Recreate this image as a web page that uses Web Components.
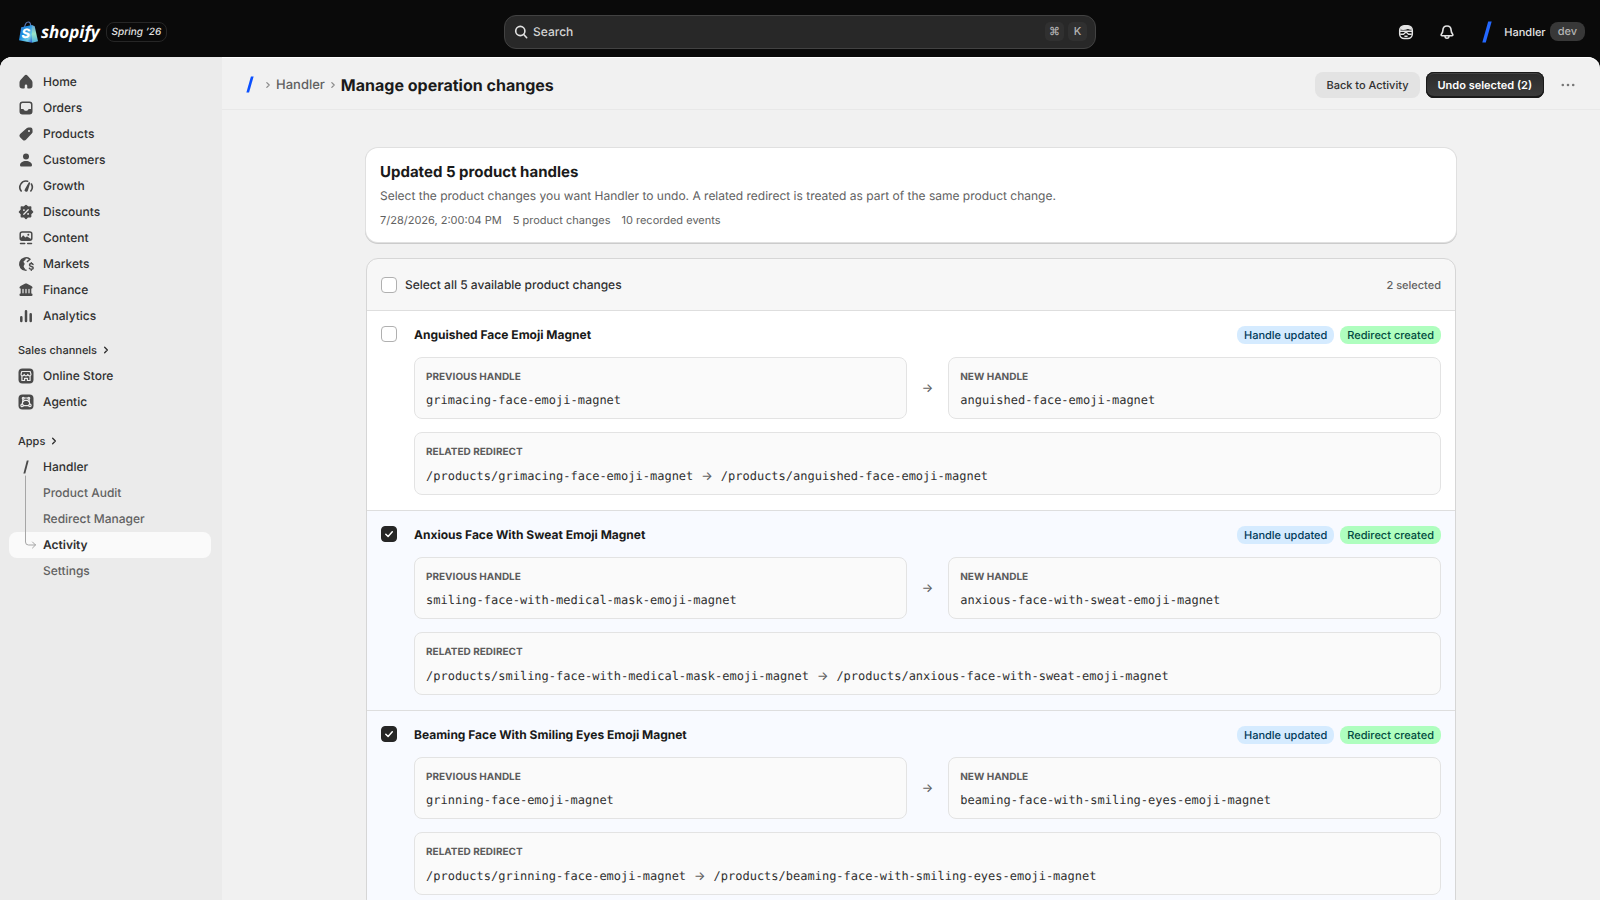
<!DOCTYPE html>
<html lang="en">
<head>
<meta charset="utf-8">
<meta name="viewport" content="width=device-width, initial-scale=1">
<title>Manage operation changes</title>
<style>
html, body{
    margin:0;
    height:100%;
}
body{
    font-family: Inter, "Liberation Sans", sans-serif;
    font-size:12px;
    line-height:20px;
    color:#303030;
    background:#0a0a0a;
    text-rendering:geometricPrecision;
}
</style>
</head>
<body>
<app-shell>
    <top-bar slot="top"></top-bar>
    <side-nav slot="nav"></side-nav>
    <page-header slot="header" parent="Handler" heading="Manage operation changes"></page-header>

    <summary-card heading="Updated 5 product handles">
        Select the product changes you want Handler to undo. A related redirect is treated as part of the same product change.
        <span slot="meta">7/28/2026, 2:00:04 PM</span>
        <span slot="meta">5 product changes</span>
        <span slot="meta">10 recorded events</span>
    </summary-card>

    <change-list label="Select all 5 available product changes" count="2 selected">
        <change-row heading="Anguished Face Emoji Magnet" from="grimacing-face-emoji-magnet" to="anguished-face-emoji-magnet"></change-row>
        <change-row selected heading="Anxious Face With Sweat Emoji Magnet" from="smiling-face-with-medical-mask-emoji-magnet" to="anxious-face-with-sweat-emoji-magnet"></change-row>
        <change-row selected heading="Beaming Face With Smiling Eyes Emoji Magnet" from="grinning-face-emoji-magnet" to="beaming-face-with-smiling-eyes-emoji-magnet"></change-row>
    </change-list>
</app-shell>

<script>
// 20x20 icons, keyed by name
const icons = {
    home: '<path fill="currentColor" d="M8.344 3.692a2.25 2.25 0 0 1 3.312 0l3.854 4.19a3.75 3.75 0 0 1 .99 2.538v3.33a2.75 2.75 0 0 1-2.75 2.75h-1.75a.75.75 0 0 1-.75-.75v-2a1.25 1.25 0 0 0-2.5 0v2a.75.75 0 0 1-.75.75h-1.75a2.75 2.75 0 0 1-2.75-2.75v-3.33c0-.94.353-1.846.99-2.539z"/>',
    orders: '<path fill="currentColor" fill-rule="evenodd" d="M6.5 3.5h7a3 3 0 0 1 3 3v7a3 3 0 0 1-3 3h-7a3 3 0 0 1-3-3v-7a3 3 0 0 1 3-3zm0 1.5A1.5 1.5 0 0 0 5 6.5V11h1.9c.5 0 .9.3 1.1.7l.3.6c.1.3.4.5.7.5h2c.3 0 .6-.2.7-.5l.3-.6c.2-.4.6-.7 1.100-.7H15V6.500A1.500 1.500 0 0 0 13.500 5z"/>',
    products: '<path fill="currentColor" fill-rule="evenodd" d="M10.600 4.200a3 3 0 0 1 2-.8l2 .1a2 2 0 0 1 1.900 1.900l.1 2a3 3 0 0 1-.8 2.200l-5.600 6a2.500 2.500 0 0 1-3.600.1l-2.300-2.300a2.500 2.500 0 0 1 .1-3.600zM13 8a1 1 0 1 0 0-2 1 1 0 0 0 0 2z"/>',
    customers: '<circle cx="10" cy="6.500" r="3" fill="currentColor"/><path fill="currentColor" d="M10 11c3.400 0 6 1.700 6 4 0 1-.7 1.500-1.600 1.500H5.600C4.700 16.500 4 16 4 15c0-2.300 2.600-4 6-4z"/>',
    growth: '<path fill="none" stroke="currentColor" stroke-width="1.600" stroke-linecap="round" d="M5.200 15A6.200 6.200 0 0 1 11.600 5.200M15.400 8a6.200 6.200 0 0 1-.6 7"/><path fill="currentColor" d="M13.600 6.300c.4.100.6.500.5.900l-2.200 7.300a1.700 1.700 0 1 1-2.900-1.600l3.700-6.300c.2-.3.500-.4.900-.3z"/>',
    discounts: '<path fill="currentColor" stroke="currentColor" stroke-width="1.600" stroke-linejoin="round" d="M10 3.500l1.800 1.700 2.800-.1-.1 2.800L16.500 10l-2 1.900.1 2.700-2.800-.1L10 16.500l-1.800-2-2.800.1.100-2.700-2-1.900 2-2.100-.1-2.800 2.800.1z"/><path stroke="#ebebeb" stroke-width="1.300" stroke-linecap="round" d="M12.200 7.800l-4.400 4.400"/><circle cx="7.900" cy="8.100" r=".95" fill="#ebebeb"/><circle cx="12.100" cy="11.900" r=".95" fill="#ebebeb"/>',
    content: '<rect x="4.200" y="4" width="11.600" height="8.300" rx="2" fill="none" stroke="currentColor" stroke-width="1.500"/><path fill="currentColor" d="M4.300 10.500l2.300-2.600c.4-.4.900-.4 1.300 0L9.400 9.500l1-.8c.4-.3.800-.3 1.200 0l3.800 2.600-1 1.200H5z"/><circle cx="12.300" cy="6.700" r="1" fill="currentColor"/><path stroke="currentColor" stroke-width="1.500" stroke-linecap="round" d="M4.500 15.500h4.200M11.700 15.500h3.800"/>',
    markets: '<path fill="none" stroke="currentColor" stroke-width="1.500" stroke-linecap="round" d="M10 16.300A6.200 6.200 0 1 1 13.800 5.200"/><path fill="currentColor" d="M3.800 8.500C4.800 5.800 7 4 9.500 4c.6 1-.1 2.200-1.200 2.700-1 .5-.9 1.400-.2 2 .9.800.6 1.900-.2 2.700-.6.700.1 2.100 1 3.100v1.400C5.800 15.500 3 12.300 3.800 8.500z"/><path fill="none" stroke="currentColor" stroke-width="1.500" stroke-linecap="round" stroke-linejoin="round" d="M13.700 5.500l-2.300 2M17 10.500c-.3-.6-.9-.9-1.700-.9-1 0-1.800.5-1.800 1.400 0 2 3.700.9 3.700 2.900 0 .9-.8 1.400-1.900 1.400-.9 0-1.600-.3-1.900-1M15.300 8.700v.9M15.300 15.300v.9"/>',
    finance: '<path fill="currentColor" d="M9.300 3.600a1.500 1.500 0 0 1 1.400 0l4.700 2.300c.7.400 1.100 1 1.100 1.700 0 .6-.4 1-1 1H15.300v4.900h.2a1 1 0 0 1 1 1v.5a1 1 0 0 1-1 1h-11a1 1 0 0 1-1-1v-.5a1 1 0 0 1 1-1h.2V8.600H4.500c-.6 0-1-.4-1-1 0-.7.4-1.300 1.100-1.700z"/><path stroke="#ebebeb" stroke-width="1.200" stroke-linecap="round" d="M7 9.300v3.500M10 9.300v3.500M13 9.300v3.500"/>',
    analytics: '<path stroke="currentColor" stroke-width="2.500" stroke-linecap="round" d="M5.300 11.200v3.700M10 5.300v9.600M14.700 8.200v6.700"/>',
    store: '<rect x="2.500" y="2.500" width="15" height="15" rx="4" fill="currentColor"/><g fill="none" stroke="#ebebeb" stroke-width="1.200" stroke-linejoin="round" stroke-linecap="round"><path d="M5.800 5.500h8.400l.8 2.800c0 1-.7 1.500-1.400 1.500-.9 0-1.600-.6-1.800-1.400-.2.800-.9 1.400-1.800 1.400s-1.600-.6-1.800-1.400c-.2.800-.9 1.400-1.800 1.400-.7 0-1.400-.5-1.400-1.500zM5.900 10v4.500h2.700v-2.200h2.800v2.200h2.700V10"/></g>',
    agentic: '<rect x="2.500" y="2.500" width="15" height="15" rx="4" fill="currentColor"/><g fill="none" stroke="#ebebeb" stroke-width="1.200" stroke-linejoin="round" stroke-linecap="round"><path d="M8.200 6h3.600M13 7.300l.7 4.900M7 7.300l-.7 4.900M7.300 13.600h5.400"/><path d="M7.300 9.500l1.200-1.200h3l1.200 1.200"/><circle cx="7.200" cy="6.300" r=".9"/><circle cx="12.800" cy="6.300" r=".9"/><circle cx="6.100" cy="13.400" r="1.200"/><circle cx="13.900" cy="13.400" r="1.200"/></g>',
    chevron: '<path fill="none" stroke="currentColor" stroke-width="1.500" stroke-linecap="round" stroke-linejoin="round" d="M8.500 7l3 3-3 3"/>',
    search: '<g fill="none" stroke="currentColor" stroke-width="1.600" stroke-linecap="round"><circle cx="9.300" cy="9" r="4.600"/><path d="M12.700 12.500l3 3.200"/></g>',
    sidekick: '<rect x="3.700" y="3.700" width="12.600" height="12.800" rx="4.500" fill="none" stroke="currentColor" stroke-width="1.500"/><path fill="currentColor" d="M4 7.500C4.500 5 6.500 3.500 9 3.500h2c2.500 0 4.500 1.500 5 4-1.500.4-3 .1-4-.6C9.500 8 6.500 8.300 4 7.500z"/><path fill="none" stroke="currentColor" stroke-width="1.400" stroke-linejoin="round" d="M4 9.300h12M4.300 12.200h3.200L10 10l2.500 2.200h3.200M8.400 14.200h3.200"/>',
    bell: '<path fill="none" stroke="currentColor" stroke-width="1.600" stroke-linejoin="round" d="M10 4c-2.500 0-4 1.800-4.100 4.100C5.800 10 5.500 10.700 4.600 11.700c-.9 1.100-.5 2 .7 2h9.400c1.200 0 1.600-.9.7-2-.9-1-1.200-1.700-1.300-3.600C14 5.800 12.500 4 10 4z"/><path fill="none" stroke="currentColor" stroke-width="1.500" d="M8 14c0 1.500.8 2.300 2 2.300s2-.8 2-2.300"/>',
    dots: '<g fill="currentColor"><circle cx="4.800" cy="10" r="1.300"/><circle cx="10" cy="10" r="1.300"/><circle cx="15.200" cy="10" r="1.300"/></g>'
};

// 20x26 pieces of the tree beside the app links: they join up from row to row
const branches = {
    root: '<path fill="#4a4a4a" d="M10.800 6.500h1.900L9.300 19.500H7.400z"/><path d="M9.500 22v4"/>',
    line: '<path d="M9.500 0v26"/>',
    turn: '<path d="M9.500 0v10a3 3 0 0 0 3 3h7M16.500 10l3 3-3 3"/>',
    none: ''
};

function define(name, html, setup){
    const template = document.createElement('template');
    template.innerHTML = html;

    window.customElements.define(name, class extends HTMLElement{
        constructor(){
            super();
            this.attachShadow({mode:'open'});
            this.shadowRoot.appendChild(template.content.cloneNode(true));
        }
        connectedCallback(){
            if(setup) setup(this, this.shadowRoot);
        }
    });
}

function fill(host, root, names){
    names.forEach(name => {
        root.querySelectorAll('.' + name).forEach(el => el.textContent = host.getAttribute(name));
    });
}

define('ui-icon', `
<style>
:host{
    display:block;
    flex:none;
    width:20px;
    height:20px;
}
svg{
    display:block;
    width:100%;
    height:100%;
}
</style>
<svg viewBox="0 0 20 20" aria-hidden="true"></svg>
`, (host, root) => {
    root.querySelector('svg').innerHTML = icons[host.getAttribute('name')];
});

define('tree-branch', `
<style>
:host{
    display:block;
    flex:none;
    width:20px;
    height:26px;
}
svg{
    display:block;
    overflow:visible;
}
</style>
<svg width="20" height="26" viewBox="0 0 20 26" fill="none" stroke-linecap="round" stroke-linejoin="round" aria-hidden="true"></svg>
`, (host, root) => {
    const svg = root.querySelector('svg');
    svg.innerHTML = branches[host.getAttribute('part-of')];
    svg.querySelectorAll('path:not([fill])').forEach(p => p.setAttribute('stroke', '#a6a6a6'));
});

define('slash-mark', `
<style>
:host{
    display:block;
    flex:none;
    width:10px;
    height:22px;
}
svg{
    display:block;
    width:100%;
    height:100%;
}
</style>
<svg viewBox="0 0 10 22" aria-hidden="true"><path fill="var(--slash, #2468ff)" d="M6.200.5h3.500L3.800 21.500H.3z"/></svg>
`);

define('shop-logo', `
<style>
:host{
    display:flex;
    align-items:center;
    gap:3px;
    color:#fff;
}
.word{
    font:italic 700 17px/22px "Open Sans", sans-serif;
}
</style>
<svg width="19" height="22" viewBox="0 0 19 22" aria-hidden="true">
    <defs>
        <linearGradient id="bag" x1="0" y1="0" x2="1" y2="1">
            <stop offset="0" stop-color="#4a7fd0"/>
            <stop offset=".4" stop-color="#1c8be0"/>
            <stop offset=".75" stop-color="#6fd0e8"/>
            <stop offset="1" stop-color="#2a55c8"/>
        </linearGradient>
        <linearGradient id="side" x1="0" y1="0" x2="0" y2="1">
            <stop offset="0" stop-color="#5fa0d8"/>
            <stop offset=".5" stop-color="#9ce8c8"/>
            <stop offset="1" stop-color="#4ab0e0"/>
        </linearGradient>
    </defs>
    <path fill="none" stroke="#5b78b8" stroke-width="1.200" d="M5.500 6.500C6 3.500 7.500 1 9.300 1c1.700 0 2.400 2 2.400 4.500"/>
    <path fill="url(#bag)" d="M2.200 6.200L13 4v17.700L0 19.300z"/>
    <path fill="url(#side)" d="M13 4l2.700 1.300L19 20.200l-6 1.500z"/>
    <text x="2.600" y="17" fill="#fff" font-family="Inter, sans-serif" font-size="13" font-weight="800" font-style="italic">S</text>
</svg>
<span class="word">shopify</span>
`);

define('top-bar', `
<style>
:host{
    display:grid;
    grid-template-columns:1fr minmax(200px, 592px) 1fr;
    align-items:center;
    height:57px;
    padding:6px 15px 0;
    box-sizing:border-box;
    color:#e3e3e3;
}
.left, .right{
    display:flex;
    align-items:center;
}
.left{
    gap:6px;
    padding-left:4px;
}
.edition{
    height:20px;
    padding:0 5px;
    border:1px solid #262626;
    border-radius:8px;
    font-size:10px;
    line-height:18px;
    font-style:italic;
    font-weight:500;
    box-sizing:border-box;
}
.search{
    display:flex;
    align-items:center;
    gap:2px;
    height:34px;
    padding:0 8px 0 6px;
    border:1px solid #424242;
    border-radius:12px;
    background:#282828;
    box-sizing:border-box;
}
.search input{
    flex:1;
    min-width:0;
    padding:0;
    border:0;
    outline:0;
    background:none;
    font:450 12px/20px Inter, sans-serif;
    text-rendering:inherit;
    color:#e3e3e3;
}
.search input::placeholder{
    color:#d4d4d4;
    opacity:1;
}
kbd{
    width:19px;
    margin-left:2px;
    border-radius:5px;
    background:#303030;
    color:#b5b5b5;
    font:500 11px/19px Inter, sans-serif;
    text-align:center;
}
.right{
    justify-content:flex-end;
}
button{
    display:flex;
    align-items:center;
    padding:0;
    border:0;
    background:none;
    color:inherit;
    font:500 11px/20px Inter, sans-serif;
    text-rendering:inherit;
}
.tool{
    margin-right:21px;
}
.account{
    gap:4px;
    margin-left:4px;
}
.account slash-mark{
    margin-right:8px;
}
.env{
    padding:0 8px;
    border-radius:8px;
    background:#383838;
    color:#b5b5b5;
    line-height:19px;
}
</style>
<div class="left">
    <shop-logo></shop-logo>
    <span class="edition">Spring ’26</span>
</div>
<label class="search">
    <ui-icon name="search"></ui-icon>
    <input type="text" placeholder="Search" aria-label="Search">
    <kbd>⌘</kbd>
    <kbd>K</kbd>
</label>
<div class="right">
    <button class="tool" aria-label="Sidekick"><ui-icon name="sidekick"></ui-icon></button>
    <button class="tool" aria-label="Notifications"><ui-icon name="bell"></ui-icon></button>
    <button class="account"><slash-mark></slash-mark>Handler <span class="env">dev</span></button>
</div>
`);

define('nav-item', `
<style>
:host{
    display:block;
    font-weight:550;
    color:#303030;
}
:host([sub]){
    font-weight:450;
    color:#616161;
}
:host([active]) a{
    background:#fafafa;
}
:host([active]){
    font-weight:600;
    color:#303030;
}
a{
    display:flex;
    align-items:center;
    gap:7px;
    height:26px;
    padding:0 7px;
    border-radius:8px;
    color:inherit;
    text-decoration:none;
}
::slotted(ui-icon){
    color:#4a4a4a;
}
</style>
<a href="#"><slot name="icon"></slot><slot></slot></a>
`);

define('nav-group', `
<style>
:host{
    display:block;
}
.title{
    display:flex;
    align-items:center;
    gap:0;
    height:26px;
    padding:0 9px;
    border:0;
    background:none;
    font:550 11px/16px Inter, sans-serif;
    text-rendering:inherit;
    color:#303030;
}
.title[hidden]{
    display:none;
}
ui-icon{
    width:18px;
    height:18px;
}
</style>
<button class="title"><span class="heading"></span><ui-icon name="chevron"></ui-icon></button>
<slot></slot>
`, (host, root) => {
    fill(host, root, ['heading']);
    root.querySelector('.title').hidden = !host.hasAttribute('heading');
});

define('side-nav', `
<style>
:host{
    display:flex;
    flex-direction:column;
    padding:12px 11px 12px 9px;
    background:#ebebeb;
}
.channels{
    margin-top:8px;
}
.apps{
    margin-top:13px;
}
</style>
<nav-group id="main"></nav-group>
<nav-group class="channels" heading="Sales channels">
    <nav-item><ui-icon slot="icon" name="store"></ui-icon>Online Store</nav-item>
    <nav-item><ui-icon slot="icon" name="agentic"></ui-icon>Agentic</nav-item>
</nav-group>
<nav-group class="apps" heading="Apps">
    <nav-item><tree-branch slot="icon" part-of="root"></tree-branch>Handler</nav-item>
    <nav-item sub><tree-branch slot="icon" part-of="line"></tree-branch>Product Audit</nav-item>
    <nav-item sub><tree-branch slot="icon" part-of="line"></tree-branch>Redirect Manager</nav-item>
    <nav-item active><tree-branch slot="icon" part-of="turn"></tree-branch>Activity</nav-item>
    <nav-item sub><tree-branch slot="icon" part-of="none"></tree-branch>Settings</nav-item>
</nav-group>
`, (host, root) => {
    const names = ['Home', 'Orders', 'Products', 'Customers', 'Growth', 'Discounts', 'Content', 'Markets', 'Finance', 'Analytics'];
    root.querySelector('#main').innerHTML = names.map(name =>
        `<nav-item><ui-icon slot="icon" name="${name.toLowerCase()}"></ui-icon>${name}</nav-item>`
    ).join('');
});

define('page-header', `
<style>
:host{
    display:flex;
    align-items:center;
    justify-content:space-between;
    height:53px;
    padding:3px 22px 0 24px;
    border-bottom:1px solid #e8e8e8;
    box-sizing:border-box;
}
nav, .actions{
    display:flex;
    align-items:center;
}
slash-mark{
    --slash:#0b50ff;
    width:8px;
    height:17px;
    margin-right:6px;
}
ui-icon{
    width:16px;
    color:#8a8a8a;
}
a{
    font-size:13px;
    font-weight:450;
    color:#616161;
    text-decoration:none;
}
h1{
    margin:0;
    font-size:16px;
    line-height:24px;
    font-weight:650;
    color:#1a1a1a;
}
.actions{
    gap:6px;
}
button{
    height:26px;
    padding:0 11px;
    border:0;
    border-radius:8px;
    background:#e3e3e3;
    font:550 11px/16px Inter, sans-serif;
    text-rendering:inherit;
    color:#303030;
}
.primary{
    padding:0 12px;
    background:linear-gradient(#2b2b2b, #3d3d3d);
    box-shadow:inset 0 0 0 1px #1a1a1a, inset 0 -2px 0 #1a1a1a, inset 0 2px 0 #444;
    font-weight:600;
    color:#fff;
}
.more{
    margin-left:8px;
    padding:0;
    background:none;
}
.more ui-icon{
    width:20px;
    color:#777;
}
</style>
<nav>
    <slash-mark></slash-mark>
    <ui-icon name="chevron"></ui-icon>
    <a href="#" class="parent"></a>
    <ui-icon name="chevron"></ui-icon>
    <h1 class="heading"></h1>
</nav>
<div class="actions">
    <button>Back to Activity</button>
    <button class="primary">Undo selected (2)</button>
    <button class="more" aria-label="More actions"><ui-icon name="dots"></ui-icon></button>
</div>
`, (host, root) => fill(host, root, ['parent', 'heading']));

define('summary-card', `
<style>
:host{
    display:grid;
    gap:4px;
    padding:14px 14px 12px;
    border-radius:12px;
    background:#fff;
    box-shadow:0 0 0 1px #e0e0e0, 0 1px 0 1px #cbcbcb;
}
h2{
    margin:0;
    font-size:15px;
    line-height:20px;
    font-weight:650;
    color:#1a1a1a;
}
p{
    margin:0;
    color:#616161;
}
.meta{
    display:flex;
    gap:11px;
    font-size:11px;
    color:#616161;
}
</style>
<h2 class="heading"></h2>
<p><slot></slot></p>
<div class="meta"><slot name="meta"></slot></div>
`, (host, root) => fill(host, root, ['heading']));

define('check-box', `
<style>
:host{
    display:block;
    flex:none;
}
label{
    display:flex;
    align-items:center;
    gap:8px;
}
input{
    appearance:none;
    width:16px;
    height:16px;
    margin:0;
    border:1px solid #b0b0b0;
    border-radius:4px;
    background:#fff;
}
input:checked{
    border-color:#262626;
    background:#262626 url("data:image/svg+xml,%3Csvg xmlns='http://www.w3.org/2000/svg' viewBox='0 0 14 14'%3E%3Cpath fill='none' stroke='white' stroke-width='1.500' stroke-linecap='round' stroke-linejoin='round' d='M3.800 7.300l2.300 2.200 4.200-4.800'/%3E%3C/svg%3E") center / 14px no-repeat;
}
</style>
<label><input type="checkbox"><slot></slot></label>
`, (host, root) => {
    const input = root.querySelector('input');
    input.checked = host.hasAttribute('checked');
    if(host.title) input.setAttribute('aria-label', host.title);
});

define('status-badge', `
<style>
:host{
    display:block;
    padding:0 7px;
    border-radius:8px;
    background:#d5ebff;
    color:#003a5a;
    font-size:11px;
    line-height:18px;
    font-weight:500;
}
:host([tone="success"]){
    background:#affebf;
    color:#014b40;
}
</style>
<slot></slot>
`);

define('value-box', `
<style>
:host{
    display:grid;
    gap:5px;
    padding:11px 11px 8px;
    border:1px solid #e3e3e3;
    border-radius:8px;
    background:#fafafa;
}
.label{
    font-size:10px;
    line-height:16px;
    font-weight:650;
    color:#5c5c5c;
}
.value{
    display:flex;
    align-items:center;
    flex-wrap:wrap;
    gap:8px;
    font:12px/20px "DejaVu Sans Mono", monospace;
    color:#303030;
}
</style>
<div class="label"></div>
<div class="value"><slot></slot></div>
`, (host, root) => fill(host, root, ['label']));

define('change-row', `
<style>
:host{
    display:grid;
    grid-template-columns:20px 1fr;
    gap:13px;
    padding:15px 14px;
    border-top:1px solid #dedede;
    background:#fff;
}
:host([selected]){
    background:#f8faff;
}
.body{
    display:grid;
    gap:13px;
}
.top{
    display:flex;
    align-items:center;
    gap:6px;
    height:18px;
}
h3{
    flex:1;
    margin:0;
    font-size:12px;
    line-height:20px;
    font-weight:650;
    color:#1a1a1a;
}
.pair{
    display:grid;
    grid-template-columns:1fr auto 1fr;
    align-items:center;
    gap:15px;
}
.arrow{
    font:450 12px/20px Inter, sans-serif;
    color:#616161;
}
.redirect{
    gap:6px;
}
</style>
<check-box></check-box>
<div class="body">
    <div class="top">
        <h3 class="heading"></h3>
        <status-badge>Handle updated</status-badge>
        <status-badge tone="success">Redirect created</status-badge>
    </div>
    <div class="pair">
        <value-box label="PREVIOUS HANDLE"><span class="from"></span></value-box>
        <span class="arrow">→</span>
        <value-box label="NEW HANDLE"><span class="to"></span></value-box>
    </div>
    <value-box class="redirect" label="RELATED REDIRECT"><span>/products/<span class="from"></span></span><span class="arrow">→</span><span>/products/<span class="to"></span></span></value-box>
</div>
`, (host, root) => {
    fill(host, root, ['heading', 'from', 'to']);
    const box = root.querySelector('check-box');
    box.title = host.getAttribute('heading');
    box.toggleAttribute('checked', host.hasAttribute('selected'));
    box.replaceWith(box.cloneNode(true));
});

define('change-list', `
<style>
:host{
    display:block;
    overflow:hidden;
    border:1px solid #d6d6d6;
    border-radius:12px;
    background:#f7f7f7;
}
header{
    display:flex;
    align-items:center;
    justify-content:space-between;
    height:51px;
    padding:0 14px;
    font-weight:450;
}
.count{
    font-size:11px;
    color:#616161;
}
</style>
<header>
    <check-box><span class="label"></span></check-box>
    <span class="count"></span>
</header>
<slot></slot>
`, (host, root) => fill(host, root, ['label', 'count']));

define('app-shell', `
<style>
:host{
    display:grid;
    grid-template-rows:auto 1fr;
    height:100vh;
    overflow:hidden;
}
.frame{
    display:grid;
    grid-template-columns:222px 1fr;
    min-height:0;
    overflow:hidden;
    border-radius:12px 12px 0 0;
    background:#f1f1f1;
    box-shadow:inset 0 1px 0 #fff;
}
main{
    display:flex;
    flex-direction:column;
    min-width:0;
    min-height:0;
}
.content{
    flex:1;
    overflow-y:auto;
    scrollbar-width:none;
    padding:38px 24px;
}
.column{
    display:grid;
    gap:16px;
    max-width:1090px;
    margin:0 auto;
}
</style>
<slot name="top"></slot>
<div class="frame">
    <slot name="nav"></slot>
    <main>
        <slot name="header"></slot>
        <div class="content"><div class="column"><slot></slot></div></div>
    </main>
</div>
`);
</script>
</body>
</html>
